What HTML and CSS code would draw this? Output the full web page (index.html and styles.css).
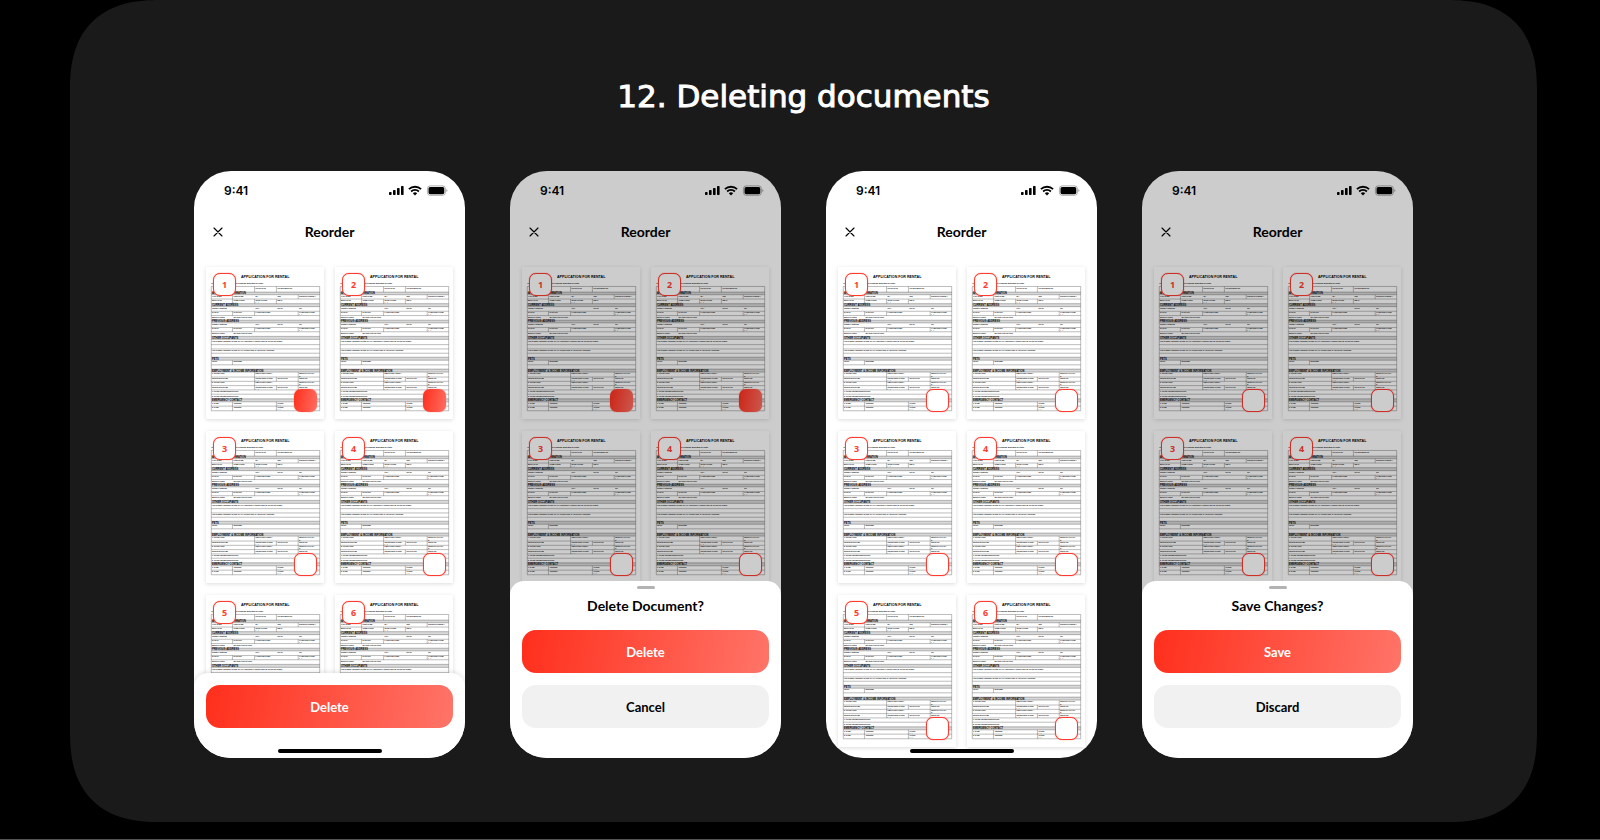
FILE: index.html
```html
<!DOCTYPE html>
<html lang="en">
<head>
<meta charset="utf-8">
<title>12. Deleting documents</title>
<link rel="stylesheet" href="styles.css">
</head>
<body>
<svg class="defs" aria-hidden="true">
  <symbol id="status" viewBox="0 0 60 12">
    <rect x="0" y="7" width="2.6" height="3" rx=".7"/><rect x="4" y="5" width="2.6" height="5" rx=".7"/><rect x="8" y="3" width="2.6" height="7" rx=".7"/><rect x="12" y="1" width="2.6" height="9" rx=".7"/>
    <path d="M19.9 4.2a8.8 8.8 0 0 1 12.2 0M22.1 6.5a5.6 5.6 0 0 1 7.8 0" fill="none" stroke="#000" stroke-width="1.8"/>
    <path d="M23.8 8.2a3.2 3.2 0 0 1 4.4 0L26 10.5z"/>
    <rect x="38.4" y=".9" width="18" height="9.4" rx="2.8" fill="none" stroke="#000" stroke-opacity=".36" stroke-width=".9"/>
    <rect x="39.5" y="2" width="15.8" height="7.2" rx="1.7"/><path d="M57.4 4.2q1.1.4 1.1 1.4t-1.1 1.4z" fill-opacity=".4"/>
  </symbol>
  <symbol id="cross" viewBox="0 0 10 10"><path d="M1 1l8 8M9 1l-8 8" fill="none" stroke="#000" stroke-width="1.1" stroke-linecap="round"/></symbol>
  <symbol id="form" viewBox="0 0 357 456">
    <text class="form-title" x="179" y="30" text-anchor="middle">APPLICATION FOR RENTAL</text>
    <text class="form-text" x="17" y="49">Each co-applicant must complete a separate application for rental.</text>
    <path class="form-band" d="M16 74h328v8H16zM16 109h328v9H16zM16 159h328v8H16zM16 208h328v9H16zM16 271h328v9H16zM16 307h328v9H16zM16 397h328v9H16z"/>
    <path class="form-line" d="M16 57h328v376H16zM16 74h328M16 82h328M16 95h328M16 109h328M16 118h328M16 132h328M16 145h328M16 159h328M16 167h328M16 181h328M16 194h328M16 208h328M16 217h328M16 233h328M16 246h328M16 259h328M16 271h328M16 280h328M16 294h328M16 307h328M16 316h328M16 331h328M16 344h328M16 357h328M16 370h328M16 383h328M16 397h328M16 406h328M16 419h328"/>
    <path class="form-line" d="M147 57v17M213 57v17M80 82v27M147 95v14M213 95v14M279 82v13M80 132v13M147 132v13M279 132v13M80 181v13M147 181v13M279 181v13M80 280v14M147 316v54M213 331v13M213 357v13M279 316v54M80 406v27M213 406v27"/>
    <g class="form-head">
      <text x="18" y="81">APPLICANT INFORMATION</text><text x="18" y="117">CURRENT ADDRESS</text><text x="18" y="166">PREVIOUS ADDRESS</text><text x="18" y="216">OTHER OCCUPANTS</text><text x="18" y="279">PETS</text><text x="18" y="315">EMPLOYMENT &amp; INCOME INFORMATION</text><text x="18" y="405">EMERGENCY CONTACT</text>
    </g>
    <g class="form-text">
      <text x="150" y="64">START DATE</text><text x="216" y="64">LEASE ENDING BY</text>
      <text x="18" y="88">LAST NAME</text><text x="83" y="88">FIRST NAME</text><text x="150" y="88">M.I.</text><text x="216" y="88">SSN</text><text x="282" y="88">DRIVER'S LICENSE #</text>
      <text x="18" y="101">BIRTH DATE</text><text x="83" y="101">HOME PHONE</text><text x="83" y="107">(&#160;&#160;&#160;&#160;)</text><text x="150" y="101">WORK PHONE</text><text x="150" y="107">(&#160;&#160;&#160;&#160;)</text><text x="216" y="101">EMAIL</text>
      <text x="18" y="124">STREET ADDRESS</text><text x="150" y="124">CITY</text><text x="216" y="124">STATE</text><text x="282" y="124">ZIP</text>
      <text x="18" y="138">DATE IN</text><text x="83" y="138">DATE OUT</text><text x="150" y="138">LANDLORD NAME</text><text x="282" y="138">LANDLORD PHONE</text><text x="282" y="144">(&#160;&#160;&#160;&#160;)</text>
      <text x="18" y="151">MONTHLY RENT</text><text x="83" y="151">REASON FOR LEAVING</text>
      <text x="18" y="173">STREET ADDRESS</text><text x="150" y="173">CITY</text><text x="216" y="173">STATE</text><text x="282" y="173">ZIP</text>
      <text x="18" y="187">DATE IN</text><text x="83" y="187">DATE OUT</text><text x="150" y="187">LANDLORD NAME</text><text x="282" y="187">LANDLORD PHONE</text><text x="282" y="193">(&#160;&#160;&#160;&#160;)</text>
      <text x="18" y="200">MONTHLY RENT</text><text x="83" y="200">REASON FOR LEAVING</text>
      <text x="18" y="224">LIST NAMES AND BIRTH DATES OF ALL ADDITIONAL OCCUPANTS 18 YEARS OR OLDER</text>
      <text x="18" y="252">LIST NAMES AND BIRTH DATES OF ALL OCCUPANTS 17 YEARS OR YOUNGER</text>
      <text x="18" y="286">PETS?</text><text x="83" y="286">DESCRIBE</text>
      <text x="18" y="323">1. OCCUPATION</text><text x="150" y="323">EMPLOYER/AGENCY</text><text x="282" y="323">MONTHLY SALARY</text><text x="282" y="330">$</text>
      <text x="18" y="337">SUPERVISOR NAME</text><text x="150" y="337">SUPERVISOR PHONE</text><text x="150" y="343">(&#160;&#160;&#160;&#160;)</text><text x="216" y="337">START DATE</text><text x="282" y="337">END DATE</text>
      <text x="18" y="350">2. OCCUPATION</text><text x="150" y="350">EMPLOYER/AGENCY</text><text x="282" y="350">MONTHLY SALARY</text><text x="282" y="356">$</text>
      <text x="18" y="363">SUPERVISOR NAME</text><text x="150" y="363">SUPERVISOR PHONE</text><text x="150" y="369">(&#160;&#160;&#160;&#160;)</text><text x="216" y="363">START DATE</text><text x="282" y="363">END DATE</text>
      <text x="18" y="377">1. OTHER INCOME DESCRIPTION</text><text x="18" y="390">2. OTHER INCOME DESCRIPTION</text>
      <text x="18" y="412">1. NAME</text><text x="83" y="412">ADDRESS</text><text x="216" y="412">PHONE</text><text x="216" y="418">(&#160;&#160;&#160;&#160;)</text>
      <text x="18" y="426">2. NAME</text><text x="83" y="426">ADDRESS</text><text x="216" y="426">PHONE</text><text x="216" y="432">(&#160;&#160;&#160;&#160;)</text>
    </g>
  </symbol>
</svg>

<main class="board">
  <h1 class="board-title">12. Deleting documents</h1>
  <div class="phones">

    <section class="phone">
      <div class="status"><span>9:41</span><svg class="status-icons"><use href="#status"/></svg></div>
      <header class="nav"><button class="close" aria-label="Close"><svg><use href="#cross"/></svg></button><h2 class="nav-title">Reorder</h2></header>
      <div class="docs">
        <label class="doc"><svg class="form"><use href="#form"/></svg><span class="num">1</span><input class="pick" type="checkbox" aria-label="Document 1" checked></label>
        <label class="doc"><svg class="form"><use href="#form"/></svg><span class="num">2</span><input class="pick" type="checkbox" aria-label="Document 2" checked></label>
        <label class="doc"><svg class="form"><use href="#form"/></svg><span class="num">3</span><input class="pick" type="checkbox" aria-label="Document 3"></label>
        <label class="doc"><svg class="form"><use href="#form"/></svg><span class="num">4</span><input class="pick" type="checkbox" aria-label="Document 4"></label>
        <label class="doc"><svg class="form"><use href="#form"/></svg><span class="num">5</span><input class="pick" type="checkbox" aria-label="Document 5"></label>
        <label class="doc"><svg class="form"><use href="#form"/></svg><span class="num">6</span><input class="pick" type="checkbox" aria-label="Document 6"></label>
      </div>
      <div class="sheet sheet-bar"><button class="btn btn-primary">Delete</button></div>
      <div class="home"></div>
    </section>

    <section class="phone">
      <div class="status"><span>9:41</span><svg class="status-icons"><use href="#status"/></svg></div>
      <header class="nav"><button class="close" aria-label="Close"><svg><use href="#cross"/></svg></button><h2 class="nav-title">Reorder</h2></header>
      <div class="docs">
        <label class="doc"><svg class="form"><use href="#form"/></svg><span class="num">1</span><input class="pick" type="checkbox" aria-label="Document 1" checked></label>
        <label class="doc"><svg class="form"><use href="#form"/></svg><span class="num">2</span><input class="pick" type="checkbox" aria-label="Document 2" checked></label>
        <label class="doc"><svg class="form"><use href="#form"/></svg><span class="num">3</span><input class="pick" type="checkbox" aria-label="Document 3"></label>
        <label class="doc"><svg class="form"><use href="#form"/></svg><span class="num">4</span><input class="pick" type="checkbox" aria-label="Document 4"></label>
      </div>
      <div class="shade"></div>
      <div class="sheet" role="dialog" aria-labelledby="delete-title">
        <div class="grip"></div>
        <h3 class="sheet-title" id="delete-title">Delete Document?</h3>
        <button class="btn btn-primary">Delete</button>
        <button class="btn btn-plain">Cancel</button>
      </div>
    </section>

    <section class="phone">
      <div class="status"><span>9:41</span><svg class="status-icons"><use href="#status"/></svg></div>
      <header class="nav"><button class="close" aria-label="Close"><svg><use href="#cross"/></svg></button><h2 class="nav-title">Reorder</h2></header>
      <div class="docs">
        <label class="doc"><svg class="form"><use href="#form"/></svg><span class="num">1</span><input class="pick" type="checkbox" aria-label="Document 1"></label>
        <label class="doc"><svg class="form"><use href="#form"/></svg><span class="num">2</span><input class="pick" type="checkbox" aria-label="Document 2"></label>
        <label class="doc"><svg class="form"><use href="#form"/></svg><span class="num">3</span><input class="pick" type="checkbox" aria-label="Document 3"></label>
        <label class="doc"><svg class="form"><use href="#form"/></svg><span class="num">4</span><input class="pick" type="checkbox" aria-label="Document 4"></label>
        <label class="doc"><svg class="form"><use href="#form"/></svg><span class="num">5</span><input class="pick" type="checkbox" aria-label="Document 5"></label>
        <label class="doc"><svg class="form"><use href="#form"/></svg><span class="num">6</span><input class="pick" type="checkbox" aria-label="Document 6"></label>
      </div>
      <div class="home"></div>
    </section>

    <section class="phone">
      <div class="status"><span>9:41</span><svg class="status-icons"><use href="#status"/></svg></div>
      <header class="nav"><button class="close" aria-label="Close"><svg><use href="#cross"/></svg></button><h2 class="nav-title">Reorder</h2></header>
      <div class="docs">
        <label class="doc"><svg class="form"><use href="#form"/></svg><span class="num">1</span><input class="pick" type="checkbox" aria-label="Document 1"></label>
        <label class="doc"><svg class="form"><use href="#form"/></svg><span class="num">2</span><input class="pick" type="checkbox" aria-label="Document 2"></label>
        <label class="doc"><svg class="form"><use href="#form"/></svg><span class="num">3</span><input class="pick" type="checkbox" aria-label="Document 3"></label>
        <label class="doc"><svg class="form"><use href="#form"/></svg><span class="num">4</span><input class="pick" type="checkbox" aria-label="Document 4"></label>
      </div>
      <div class="shade"></div>
      <div class="sheet" role="dialog" aria-labelledby="save-title">
        <div class="grip"></div>
        <h3 class="sheet-title" id="save-title">Save Changes?</h3>
        <button class="btn btn-primary">Save</button>
        <button class="btn btn-plain">Discard</button>
      </div>
    </section>

  </div>
</main>
</body>
</html>
```
FILE: styles.css
```css
* { box-sizing: border-box; }

body {
  margin: 0;
  min-height: 100vh;
  background: #000;
  border-bottom: 1px solid #555;
  color: #000;
  font-family: Lato, "Open Sans", sans-serif;
}

h1, h2, h3 { margin: 0; }

button {
  font: inherit;
  border: 0;
  padding: 0;
  cursor: pointer;
}

.defs { position: absolute; width: 0; height: 0; overflow: visible; }

.board {
  margin: 0 63px 0 70px;
  padding: 76px 124px 64px;
  border-radius: 76px;
  background: #1a1a1a;
}

@supports (corner-shape: superellipse(1.3)) {
  .board { border-radius: 90px; corner-shape: superellipse(1.3); }
}

.board-title {
  margin-bottom: 55px;
  color: #fff;
  font: 400 31px/40px "DejaVu Sans", sans-serif;
  -webkit-text-stroke: 1px #fff;
  text-align: center;
}

.phones {
  display: grid;
  grid-template-columns: repeat(4, 1fr);
  gap: 45px;
}

.phone {
  position: relative;
  overflow: hidden;
  aspect-ratio: 271 / 587;
  min-height: 0;
  border-radius: 37px;
  background: #fff;
}

.status {
  display: flex;
  justify-content: space-between;
  align-items: center;
  height: 40px;
  padding: 0 16px 0 30px;
  font: 600 12px/16px Inter, sans-serif;
}

.status-icons { width: 60px; height: 12px; }

.nav {
  display: grid;
  grid-template-columns: 48px 1fr 48px;
  align-items: center;
  height: 42px;
  margin-bottom: 14px;
}

.close {
  justify-self: center;
  display: flex;
  padding: 4px;
  background: none;
}

.close svg { width: 10px; height: 10px; }

.nav-title, .sheet-title {
  font-size: 14px;
  line-height: 20px;
  font-weight: 700;
  text-align: center;
}

.docs {
  display: grid;
  grid-template-columns: 1fr 1fr;
  gap: 12px 11px;
  padding: 0 12px;
}

.doc {
  position: relative;
  aspect-ratio: 118 / 152;
  background: #fff;
  box-shadow: 0 1px 4px rgba(0, 0, 0, .14);
}

.form { display: block; width: 100%; height: 100%; }

.form-title { font: 700 11px "Liberation Sans", sans-serif; }
.form-head { font: 700 8px "Liberation Sans", sans-serif; }
.form-text { font: 700 5px "Liberation Sans", sans-serif; }
.form-band { fill: #d9d9d9; }
.form-line { fill: none; stroke: #333; stroke-width: 1; }

.num, .pick {
  position: absolute;
  width: 23px;
  height: 23px;
  margin: 0;
  border: 1px solid #ff3b2f;
  border-radius: 7px;
  background: #fff;
  box-shadow: 0 0 1px #ff3b2f;
}

.num {
  top: 6px;
  left: 7px;
  color: #ff3b2f;
  font: 700 9px/21px "Open Sans", sans-serif;
  text-align: center;
}

.pick {
  right: 7px;
  bottom: 7px;
  appearance: none;
}

.pick:checked {
  border: 0;
  background: linear-gradient(100deg, #ff2f1c, #ff6e62);
}

.shade {
  position: absolute;
  inset: 0;
  background: rgba(0, 0, 0, .2);
}

.sheet {
  position: absolute;
  left: 0;
  right: 0;
  bottom: 0;
  display: flex;
  flex-direction: column;
  gap: 12px;
  padding: 5px 12px 30px;
  border-radius: 14px 14px 0 0;
  background: #fff;
}

.sheet-bar {
  padding-top: 12px;
  box-shadow: 0 -1px 5px rgba(0, 0, 0, .12);
}

.grip {
  align-self: center;
  width: 18px;
  height: 3px;
  margin-bottom: -5px;
  border-radius: 2px;
  background: #b3b3b3;
}

.sheet-title { margin-bottom: 2px; }

.btn {
  height: 43px;
  border-radius: 14px;
  font-size: 13px;
  font-weight: 700;
}

.btn-primary {
  background: linear-gradient(100deg, #ff2f1c, #ff7468);
  color: #fff;
}

.btn-plain { background: #f1f1f1; color: #000; }

.home {
  position: absolute;
  bottom: 5px;
  left: 50%;
  width: 104px;
  height: 4px;
  margin-left: -52px;
  border-radius: 2px;
  background: #000;
}
```
